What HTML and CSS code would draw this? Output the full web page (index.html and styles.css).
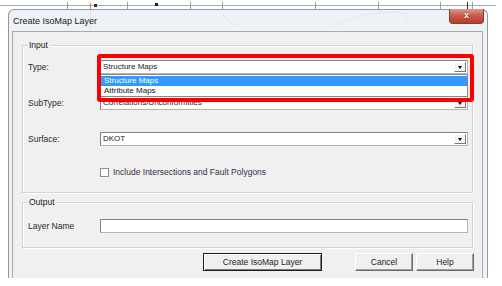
FILE: index.html
```html
<!DOCTYPE html>
<html lang="en">
<head>
    <meta charset="UTF-8">
    <title>Create IsoMap Layer</title>
    <link rel="stylesheet" href="styles.css">
</head>
<body>
    <!-- map lines seen behind the dialog -->
    <svg class="backdrop" width="502" height="32" viewBox="0 0 502 32">
        <line x1="0" y1="5.5" x2="496" y2="5.5" stroke="#a9a9a9" stroke-width="1"/>
        <g stroke="#9c9c9c" stroke-width="1">
            <line x1="67.5" y1="2" x2="67.5" y2="9"/>
            <line x1="127.5" y1="2" x2="127.5" y2="9"/>
            <line x1="190.5" y1="2" x2="190.5" y2="9"/>
            <line x1="222.5" y1="2" x2="222.5" y2="9"/>
            <line x1="315.5" y1="2" x2="315.5" y2="9"/>
            <line x1="378.5" y1="2" x2="378.5" y2="9"/>
            <line x1="440.5" y1="2" x2="440.5" y2="9"/>
            <line x1="472.5" y1="2" x2="472.5" y2="9"/>
        </g>
        <line x1="90.5" y1="3" x2="90.5" y2="30" stroke="#e86a6a" stroke-width="1"/>
        <rect x="94" y="4" width="3" height="3" fill="#333"/>
        <rect x="155" y="3" width="3" height="3" fill="#222"/>
        <line x1="467.5" y1="2" x2="467.5" y2="9" stroke="#333"/>
        <path d="M222 14 C226 18 230 22 236 26" fill="none" stroke="#8a8ad8" stroke-width="1"/>
        <path d="M333 26 C345 20 360 14 378 13 C390 12 398 11 404 14 L410 22" fill="none" stroke="#9a9ae0" stroke-width="1.2"/>
    </svg>

    <div class="window">
        <div class="titlebar">
            <span class="title">Create IsoMap Layer</span>
            <span class="close">x</span>
        </div>
        <div class="client">
            <div class="group group-input">
                <span class="legend">Input</span>

                <div class="row">
                    <label>Type:</label>
                    <div class="combo">
                        Structure Maps
                        <span class="arrow"></span>
                        <ul class="droplist">
                            <li class="selected">Structure Maps</li>
                            <li>Attribute Maps</li>
                        </ul>
                    </div>
                </div>

                <div class="row">
                    <label>SubType:</label>
                    <div class="combo">Correlations/Unconformities<span class="arrow"></span></div>
                </div>

                <div class="row">
                    <label>Surface:</label>
                    <div class="combo">DKOT<span class="arrow"></span></div>
                </div>

                <div class="row row-check">
                    <span class="checkbox"></span>
                    <span class="check-label">Include Intersections and Fault Polygons</span>
                </div>

                <div class="highlight"></div>
            </div>

            <div class="group group-output">
                <span class="legend">Output</span>
                <div class="row">
                    <label>Layer Name</label>
                    <div class="textbox"></div>
                </div>
            </div>

            <div class="buttons">
                <button class="btn btn-default">Create IsoMap Layer</button>
                <button class="btn">Cancel</button>
                <button class="btn">Help</button>
            </div>
        </div>
    </div>
</body>
</html>
```

FILE: styles.css
```css
* {
    box-sizing: border-box;
}
body {
    margin: 0;
    width: 502px;
    height: 286px;
    position: relative;
    overflow: hidden;
    background-color: #fff;
    font-family: "Liberation Sans", Arial, sans-serif;
    font-size: 8px;
    color: #1e1e1e;
}
.backdrop {
    position: absolute;
    top: 0;
    left: 0;
}
.window {
    position: relative;
    margin: 9px 0 0 8px;
    width: 480px;
    height: 269px;
    padding: 0 4px 0 3px;
    border: 1px solid #8e99a5;
    border-bottom: none;
    border-radius: 6px 6px 0 0;
    background-color: rgba(236, 240, 244, 0.9);
}
.titlebar {
    height: 21px;
    display: flex;
    align-items: center;
    padding-left: 1px;
}
.title {
    font-size: 9px;
    color: #1b1b1b;
}
.close {
    position: absolute;
    top: -1px;
    right: 3px;
    width: 35px;
    height: 15px;
    border: 1px solid #8b3b30;
    border-top: none;
    border-radius: 0 0 4px 4px;
    background: linear-gradient(#e0998c, #c9594a 50%, #b53e2e);
    color: #fff;
    font-weight: bold;
    font-size: 9px;
    line-height: 13px;
    text-align: center;
    text-shadow: 0 0 2px #5a1a10;
}
.client {
    height: 247px;
    background-color: #f0f0f0;
    border: 1px solid #a9a9a9;
    border-bottom: none;
}
.group {
    position: relative;
    margin: 0 9px;
    border: 1px solid #d3d3d3;
    box-shadow: inset 1px 1px 0 #fff, 1px 1px 0 #fff;
}
.group-input {
    margin-top: 13px;
    height: 148px;
    padding: 14px 3px 0 5px;
}
.group-output {
    margin-top: 9px;
    height: 46px;
    padding: 16px 3px 0 5px;
}
.legend {
    position: absolute;
    top: -6px;
    left: 4px;
    padding: 0 2px;
    line-height: 11px;
    font-size: 8.5px;
    background-color: #f0f0f0;
    color: #222;
}
.row {
    display: flex;
    align-items: center;
    height: 14px;
}
.row + .row {
    margin-top: 22px;
}
.row label {
    width: 72px;
    font-size: 8.5px;
    color: #2a2a2a;
}
.combo {
    position: relative;
    width: 368px;
    height: 14px;
    padding-left: 2px;
    line-height: 12px;
    background-color: #fff;
    border: 1px solid #b5b5b5;
    border-top-color: #828282;
    border-left-color: #828282;
}
.arrow {
    position: absolute;
    top: 1px;
    right: 1px;
    width: 12px;
    height: 10px;
    background-color: #f3f3f3;
    border: 1px solid;
    border-color: #fff #7a7a7a #7a7a7a #fff;
}
.arrow::after {
    content: "";
    position: absolute;
    left: 3px;
    top: 3px;
    border-left: 2.5px solid transparent;
    border-right: 2.5px solid transparent;
    border-top: 3px solid #000;
}
.droplist {
    position: absolute;
    top: 13px;
    left: -1px;
    right: -1px;
    z-index: 2;
    margin: 0;
    padding: 1px 0;
    list-style: none;
    height: 23px;
    background-color: #fff;
    border: 1px solid #8a8a8a;
}
.droplist li {
    height: 10px;
    line-height: 10px;
    padding-left: 3px;
    color: #111;
}
.droplist .selected {
    background-color: #3399ff;
    color: #fff;
}
.row-check {
    margin-top: 19px !important;
    padding-left: 72px;
}
.checkbox {
    width: 9px;
    height: 9px;
    background-color: #fff;
    border: 1px solid #8e8f8f;
}
.check-label {
    margin-left: 4px;
    font-size: 8.5px;
    color: #3a2a48;
}
.textbox {
    width: 368px;
    height: 14px;
    background-color: #fff;
    border: 1px solid #b5b5b5;
    border-top-color: #828282;
    border-left-color: #828282;
}
.highlight {
    position: absolute;
    left: 74px;
    top: 8px;
    width: 377px;
    height: 48px;
    z-index: 3;
    border: 4px solid #ff0000;
    border-radius: 3px;
}
.buttons {
    display: flex;
    margin-top: 5px;
    padding-left: 190px;
}
.btn {
    height: 18px;
    width: 58px;
    margin: 0 3px 0 0;
    padding: 0;
    font-family: "Liberation Sans", Arial, sans-serif;
    font-size: 8.5px;
    color: #1e1e1e;
    background-color: #f0f0f0;
    border: 1px solid;
    border-color: #fff #6b6b6b #6b6b6b #fff;
    box-shadow: inset -1px -1px 0 #a0a0a0;
}
.btn-default {
    width: 119px;
    margin-right: 33px;
    border-color: #1e1e1e;
    box-shadow: inset 1px 1px 0 #fff, inset -1px -1px 0 #7a7a7a;
}
```
